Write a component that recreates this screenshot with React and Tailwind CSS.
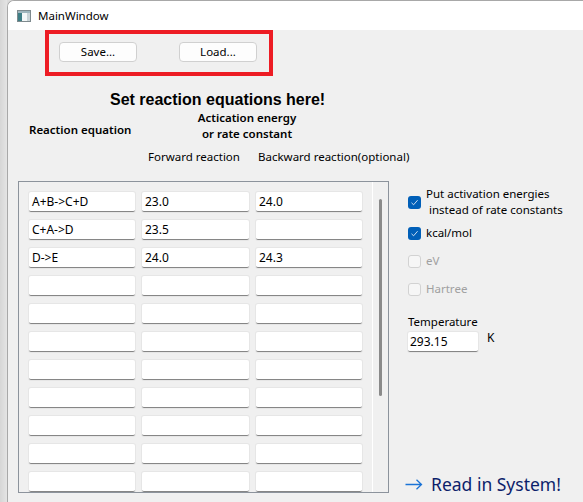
import React from 'react'

const font = { fontFamily: '"Noto Sans", "Open Sans", sans-serif' }

const rows = [
  ['A+B->C+D', '23.0', '24.0'],
  ['C+A->D', '23.5', ''],
  ['D->E', '24.0', '24.3'],
  ['', '', ''],
  ['', '', ''],
  ['', '', ''],
  ['', '', ''],
  ['', '', ''],
  ['', '', ''],
  ['', '', ''],
  ['', '', ''],
]

function Field({ value, w }) {
  return (
    <div className={`${w} h-[20px] shrink-0 bg-white rounded-[2px] border-b border-[#868686] shadow-[0_0_0_1px_#e6e6e6] flex items-center px-[3px] text-[12px] text-black`}>
      {value}
    </div>
  )
}

function Check({ checked, disabled, children }) {
  return (
    <div className="flex items-center gap-[5px]">
      {checked ? (
        <div className="w-[13px] h-[13px] rounded-[3px] bg-[#005fb8] flex items-center justify-center shrink-0">
          <svg width="9" height="9" viewBox="0 0 9 9">
            <path d="M1.5 4.8 L3.6 6.8 L7.6 2.2" fill="none" stroke="#dfe9f5" strokeWidth="0.9" />
          </svg>
        </div>
      ) : (
        <div className="w-[13px] h-[13px] rounded-[3px] border border-[#d2d2d2] bg-[#f6f6f6] shrink-0" />
      )}
      <div className={`text-[11.5px] leading-[16px] ${disabled ? 'text-[#a0a0a0]' : 'text-black'}`}>{children}</div>
    </div>
  )
}

export default function App() {
  return (
    <div className="w-[583px] h-[502px] flex bg-[#dcdcdc] overflow-hidden" style={font}>
      {/* desktop strip on the left */}
      <div className="w-[7px] shrink-0 bg-gradient-to-r from-[#d6d6d6] to-[#e4e4e4]" />

      {/* ── Window ───────────────────────────── */}
      <div className="flex-1 flex flex-col border-l border-t border-[#a8a8a8] rounded-tl-[7px] overflow-hidden bg-white">
        <div className="h-[29px] bg-white flex items-center pl-[9px] shrink-0">
          <svg width="14" height="12" viewBox="0 0 14 12" className="mr-[7px]">
            <rect x="0.5" y="0.5" width="13" height="11" fill="#f4f7f7" stroke="#7e8a8e" />
            <rect x="1" y="1" width="4" height="10" fill="#3f7f86" />
            <rect x="1" y="1" width="12" height="2" fill="#9fb6bd" />
            <rect x="10" y="3" width="3" height="8" fill="#c9d3d6" />
          </svg>
          <span className="text-[11.5px] text-black">MainWindow</span>
        </div>

        <div className="flex-1 bg-[#f0f0f0] flex flex-col">
          {/* Save / Load, highlighted */}
          <div className="ml-[37px] w-[228px] h-[46px] border-4 border-[#ed1c24] flex items-start pt-[8px] pl-[10px] gap-[42px] shrink-0">
            <button className="w-[78px] h-[20px] bg-[#fdfdfd] border border-[#d0d0d0] rounded-[4px] text-[11.5px] leading-none text-black">Save...</button>
            <button className="w-[78px] h-[20px] bg-[#fdfdfd] border border-[#d0d0d0] rounded-[4px] text-[11.5px] leading-none text-black">Load...</button>
          </div>

          <div className="mt-[15px] pl-[102px] text-[16px] leading-[18px] font-bold text-black" style={{ fontFamily: '"Liberation Sans", Arial, sans-serif' }}>
            Set reaction equations here!
          </div>

          <div className="flex pl-[21px] mt-[1px]">
            <div className="w-[158px] mt-[12px] text-[11.5px] leading-[16px] font-semibold text-black">Reaction equation</div>
            <div className="w-[120px] text-center text-[11.5px] leading-[16px] font-semibold text-black">
              <div>Actication energy</div>
              <div>or rate constant</div>
            </div>
          </div>

          <div className="flex pl-[140px] mt-[7px] text-[11.5px] leading-[16px] text-black">
            <div className="w-[110px]">Forward reaction</div>
            <div>Backward reaction(optional)</div>
          </div>

          {/* ── Table + options ─────────────── */}
          <div className="flex mt-[16px]">
            <div className="ml-[10px] w-[371px] h-[312px] border border-[#8c939c] flex overflow-hidden shrink-0">
              <div className="flex-1 flex flex-col gap-[8px] pt-[10px] pl-[10px]">
                {rows.map((r, i) => (
                  <div key={i} className="flex gap-[7px]">
                    <Field value={r[0]} w="w-[106px]" />
                    <Field value={r[1]} w="w-[107px]" />
                    <Field value={r[2]} w="w-[106px]" />
                  </div>
                ))}
              </div>
              <div className="w-[16px] shrink-0 border-l border-white pl-[6px] pt-[17px]">
                <div className="w-[3px] h-[197px] bg-[#8a8a8a] rounded-full" />
              </div>
            </div>

            <div className="ml-[19px] flex flex-col pt-[5px]">
              <Check checked>
                <div>Put activation energies</div>
                <div>&nbsp;instead of rate constants</div>
              </Check>
              <div className="h-[28px] mt-[1px] flex items-center">
                <Check checked>kcal/mol</Check>
              </div>
              <div className="h-[28px] flex items-center">
                <Check disabled>eV</Check>
              </div>
              <div className="h-[28px] flex items-center">
                <Check disabled>Hartree</Check>
              </div>

              <div className="mt-[11px] text-[11.5px] leading-[16px] text-black">Temperature</div>
              <div className="flex items-start mt-[2px]">
                <div className="w-[70px] h-[20px] bg-white rounded-[2px] border-b border-[#868686] shadow-[0_0_0_1px_#e6e6e6] flex items-center px-[2px] text-[12px] text-black">293.15</div>
                <div className="ml-[9px] -mt-[2px] text-[12px] leading-[16px] text-black">K</div>
              </div>

              <div className="mt-[120px] flex items-center">
                <svg width="18" height="11" viewBox="0 0 18 11" className="ml-[-3px] mr-[8px]">
                  <path d="M0.5 5.5 H16.5 M11.5 0.8 L16.5 5.5 L11.5 10.2" fill="none" stroke="#1a73d6" strokeWidth="1.3" />
                </svg>
                <span className="text-[17.5px] leading-[24px] text-[#0d1f6b]">Read in System!</span>
              </div>
            </div>
          </div>
        </div>
      </div>
    </div>
  )
}
